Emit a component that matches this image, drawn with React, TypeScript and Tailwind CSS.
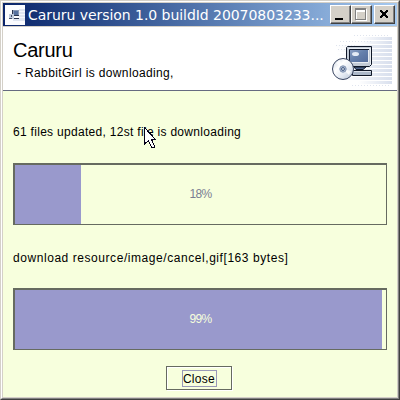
import type { ReactNode } from 'react';

function CaptionButton({ children, className = '' }: { children: ReactNode; className?: string }) {
  return (
    <button
      className={`flex h-[19px] w-[21px] items-center justify-center border border-t-white border-l-white border-r-[#404040] border-b-[#404040] bg-[#d4d0c8] shadow-[inset_-1px_-1px_0_#808080] ${className}`}
    >
      <svg width="19" height="17" viewBox="0 0 19 17" shapeRendering="crispEdges">
        {children}
      </svg>
    </button>
  );
}

function TitleBar() {
  return (
    <div className="flex h-[23px] items-center bg-linear-to-r from-[#0a246a] to-[#a6caf0] pl-[2px] pr-[2px]">
      <svg width="20" height="20" viewBox="0 0 20 20" shapeRendering="crispEdges">
        <rect width="20" height="20" fill="#fbfcff" />
        <path d="M14 4h6v12H8v-2h6z" fill="#dfe5f0" />
        <path d="M14 6h6v1h-6zM14 9h6v1h-6zM14 12h6v1h-6z" fill="#f5f7fc" />
        <path d="M7 5h7v6H7z" fill="#8797b4" />
        <path d="M9 6h4v4H9z" fill="#56719e" />
        <path d="M7 5h1v4H7zM9 10h5v1H9zM9 13h5v1H9z" fill="#2a344d" />
        <path d="M4 9h5v5H4z" fill="#c0cbdc" />
        <path d="M6 10h1v2H6zM4 13h3v1H4z" fill="#45516c" />
      </svg>
      <span className="ml-[3px] w-[300px] whitespace-pre font-['DejaVu_Sans','Noto_Sans',sans-serif] text-[14px] leading-[20px] tracking-[-0.05px] text-white">
        Caruru version 1.0 buildId 20070803233...
      </span>
      <div className="ml-[2px] flex shrink-0">
        <CaptionButton>
          <path d="M4 12h8v2H4z" fill="#000" />
        </CaptionButton>
        <CaptionButton>
          <path d="M4 3h11v12H4zM5 6v8h9V6z" fill="#fff" fillRule="evenodd" />
          <path d="M3 2h11v12H3zM4 4v9h9V4z" fill="#808080" fillRule="evenodd" />
        </CaptionButton>
        <CaptionButton className="ml-[2px]">
          <path
            d="M5 4h2v1H5zM11 4h2v1h-2zM5 5h3v1H5zM10 5h3v1h-3zM6 6h6v1H6zM7 7h4v1H7zM7 8h4v1H7zM6 9h6v1H6zM5 10h3v1H5zM10 10h3v1h-3zM5 11h2v1H5zM11 11h2v1h-2z"
            fill="#000"
          />
        </CaptionButton>
      </div>
    </div>
  );
}

function InstallerIcon() {
  const stripes = Array.from({ length: 12 }, (_, i) => i);
  return (
    <svg width="64" height="56" viewBox="0 0 64 56">
      <defs>
        <linearGradient id="stripe" x1="0" x2="1">
          <stop offset="0" stopColor="#fff" />
          <stop offset="1" stopColor="#d8dfed" />
        </linearGradient>
        <linearGradient id="screen" x1="0" y1="0" x2="1" y2="1">
          <stop offset="0" stopColor="#8fa4c8" />
          <stop offset=".45" stopColor="#6580ac" />
          <stop offset="1" stopColor="#536b9a" />
        </linearGradient>
        <linearGradient id="disc" x1="0" y1="0" x2="1" y2="1">
          <stop offset="0" stopColor="#c7d1df" />
          <stop offset=".35" stopColor="#fff" />
          <stop offset=".65" stopColor="#e3e9f2" />
          <stop offset="1" stopColor="#b1bfd2" />
        </linearGradient>
      </defs>
      {stripes.map((i) => (
        <rect key={i} x={i < 2 || i > 10 ? 30 : 8} y={2 + i * 4} width={i < 2 || i > 10 ? 34 : 56} height="3" fill="url(#stripe)" />
      ))}
      <path d="M12 6.5H44M8 10.5H28M26 .5H60M10 14.5H18M24 50.5H62" stroke="#dfe4ee" strokeDasharray="1 2" />
      <path d="M18.5 12.5 19.5 11.5H43.5V29.5L41.5 31.5H18.5z" fill="#c3cbd6" stroke="#101828" />
      <path d="M20 13.5H42.5V30" fill="none" stroke="#e8ecf2" />
      <rect x="21.5" y="14.5" width="19" height="13" fill="url(#screen)" />
      <path d="M21.5 28V14.5H41" fill="none" stroke="#111a2d" />
      <path d="M22 27.5H40.5V15" fill="none" stroke="#e8ecf2" />
      <ellipse cx="27.5" cy="19" rx="3.5" ry="2" fill="#e3ebf6" />
      <path d="M26 32h12l-3 2.5H28z" fill="#52678c" stroke="#111a2d" />
      <path d="M24.5 35.5H43.5V40.5H24.5z" fill="#acb8c9" stroke="#101828" />
      <path d="M26 36.5h17" stroke="#dce2eb" />
      <circle cx="15" cy="34" r="10.5" fill="url(#disc)" stroke="#3a4662" />
      <path d="M15 34 8 28 12 25zM15 34 23 36 21 40z" fill="#fff" opacity=".8" />
      <circle cx="15" cy="34" r="3.2" fill="#a9b7cd" stroke="#8496b4" />
      <circle cx="15" cy="34" r="1.4" fill="#fff" stroke="#39527d" />
    </svg>
  );
}

function Progress({ value, barClass, textClass }: { value: number; barClass: string; textClass: string }) {
  return (
    <div className="grid h-[62px] w-[374px] border border-t-2 border-l-2 border-[#666b60] bg-[#f7ffdd]">
      <div className={`col-start-1 row-start-1 h-full bg-[#9999cc] ${barClass}`} />
      <span className={`col-start-1 row-start-1 self-center justify-self-center pb-px text-[12px] leading-[14px] tracking-[-0.6px] ${textClass}`}>
        {value}%
      </span>
    </div>
  );
}

export default function App() {
  return (
    <div className="relative h-[400px] w-[400px] overflow-hidden border border-t-[#d4d0c8] border-l-[#d4d0c8] border-r-[#404040] border-b-[#404040] bg-[#d4d0c8] font-['Liberation_Sans',sans-serif] text-black">
      <div className="h-[398px] w-[398px] border border-t-white border-l-white border-r-[#808080] border-b-[#808080] p-px">
        <div className="flex h-[394px] w-[394px] flex-col bg-[#f7ffdd]">
          <TitleBar />
          <header className="flex h-[65px] shrink-0 justify-between border-t border-b border-t-[#d4d0c8] border-b-[#666b80] bg-white pr-[5px]">
            <div className="pl-[10px] pt-[11px]">
              <h1 className="text-[20px] leading-[24px] tracking-[-0.25px]">Caruru</h1>
              <p className="whitespace-pre pl-[4px] pt-[2px] text-[12px] leading-[18px] tracking-[0.36px]">- RabbitGirl is downloading,</p>
            </div>
            <div className="pt-[8px]">
              <InstallerIcon />
            </div>
          </header>
          <main className="flex flex-col px-[10px]">
            <p className="mt-[33px] whitespace-nowrap text-[12px] leading-[16px] tracking-[0.3px]">
              61 files updated, 12st file is downloading
            </p>
            <div className="mt-[23px]">
              <Progress value={18} barClass="w-[66px]" textClass="text-[#7a7d92]" />
            </div>
            <p className="mt-[25px] whitespace-nowrap text-[12px] leading-[16px] tracking-[0.56px]">
              download resource/image/cancel,gif[163 bytes]
            </p>
            <div className="mt-[22px]">
              <Progress value={99} barClass="w-[367px]" textClass="text-[#f7ffdd]" />
            </div>
            <button className="ml-[153px] mt-[16px] flex h-[24px] w-[66px] items-center justify-center border border-[#666b60] bg-[#f7ffdd] shadow-[inset_1px_1px_0_#fff,1px_1px_0_#fff]">
              <span className="h-[17px] w-[35px] border border-[#9999b8] text-[12px] leading-[16px] tracking-[0.3px]">Close</span>
            </button>
          </main>
        </div>
      </div>
      <svg className="absolute left-[143px] top-[126px]" width="12" height="22" viewBox="0 0 12 22" shapeRendering="crispEdges">
        <path d="M.5.5V17L4.5 13.5 7.5 20.5H10V18L7.5 12.5H11.5z" fill="#fff" stroke="#050018" />
      </svg>
    </div>
  );
}
